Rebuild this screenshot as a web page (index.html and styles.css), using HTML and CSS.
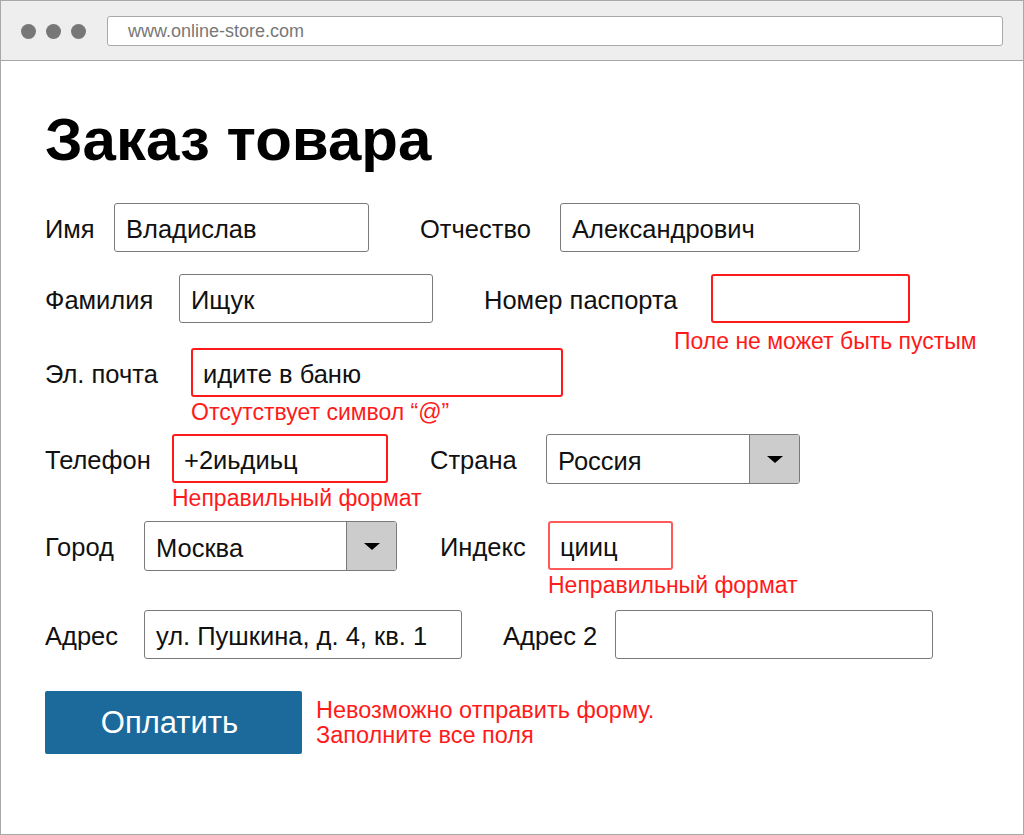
FILE: index.html
```html
<!DOCTYPE html>
<html lang="ru">
<head>
<meta charset="utf-8">
<title>Заказ товара</title>
<link rel="stylesheet" href="styles.css">
</head>
<body>
<div class="window">
  <div class="topbar">
    <div class="dots"><span class="dot"></span><span class="dot"></span><span class="dot"></span></div>
    <div class="url">www.online-store.com</div>
  </div>
  <div class="content">
    <h1 class="title">Заказ товара</h1>

    <div class="row r1">
      <label class="lbl" style="width:69px">Имя</label>
      <div class="field" style="width:255px"><div class="input">Владислав</div></div>
      <label class="lbl gap" style="width:140px;margin-left:51px">Отчество</label>
      <div class="field" style="width:300px"><div class="input">Александрович</div></div>
    </div>

    <div class="row r2">
      <label class="lbl" style="width:134px">Фамилия</label>
      <div class="field" style="width:254px"><div class="input">Ищук</div></div>
      <label class="lbl" style="width:227px;margin-left:51px">Номер паспорта</label>
      <div class="field" style="width:199px">
        <div class="input error"></div>
        <div class="msg msg-shift">Поле не может быть пустым</div>
      </div>
    </div>

    <div class="row r3">
      <label class="lbl" style="width:146px">Эл. почта</label>
      <div class="field" style="width:372px">
        <div class="input error">идите в баню</div>
        <div class="msg">Отсутствует символ “@”</div>
      </div>
    </div>

    <div class="row r4">
      <label class="lbl" style="width:127px">Телефон</label>
      <div class="field" style="width:216px">
        <div class="input error">+2иьдиьц</div>
        <div class="msg">Неправильный формат</div>
      </div>
      <label class="lbl" style="width:116px;margin-left:42px">Страна</label>
      <div class="field" style="width:254px">
        <div class="select"><span class="select-text">Россия</span><span class="arrow"></span></div>
      </div>
    </div>

    <div class="row r5">
      <label class="lbl" style="width:99px">Город</label>
      <div class="field" style="width:253px">
        <div class="select"><span class="select-text">Москва</span><span class="arrow"></span></div>
      </div>
      <label class="lbl" style="width:108px;margin-left:43px">Индекс</label>
      <div class="field" style="width:125px">
        <div class="input error light">цииц</div>
        <div class="msg">Неправильный формат</div>
      </div>
    </div>

    <div class="row r6">
      <label class="lbl" style="width:99px">Адрес</label>
      <div class="field" style="width:318px"><div class="input">ул. Пушкина, д. 4, кв. 1</div></div>
      <label class="lbl" style="width:112px;margin-left:41px">Адрес 2</label>
      <div class="field" style="width:318px"><div class="input"></div></div>
    </div>

    <div class="submit-row">
      <button class="pay">Оплатить</button>
      <div class="submit-msg">Невозможно отправить форму.<br>Заполните все поля</div>
    </div>
  </div>
</div>
</body>
</html>
```

FILE: styles.css
```css
* { box-sizing: border-box; }
html, body { margin: 0; padding: 0; }
body {
  font-family: "Liberation Sans", Arial, Helvetica, sans-serif;
  color: #111;
  background: #fff;
}
.window {
  width: 1024px;
  height: 835px;
  border: 1px solid #a8a8a8;
  overflow: hidden;
}
.topbar {
  height: 60px;
  background: #eeeeee;
  border-bottom: 1px solid #a8a8a8;
  display: flex;
  align-items: center;
  padding-left: 20px;
  padding-top: 1px;
}
.dots { display: flex; gap: 10px; }
.dot {
  width: 15px;
  height: 15px;
  border-radius: 50%;
  background: #777;
}
.url {
  margin-left: 21px;
  width: 896px;
  height: 30px;
  background: #fff;
  border: 1px solid #aaa;
  border-radius: 3px;
  font-size: 18px;
  color: #777;
  padding-left: 20px;
  line-height: 28px;
}
.content {
  padding-left: 44px;
}
.title {
  margin: 0;
  padding-top: 48px;
  font-size: 60px;
  font-weight: bold;
  line-height: 62px;
  color: #000;
}
.row {
  display: flex;
  align-items: center;
  height: 49px;
}
.r1 { margin-top: 32px; }
.r2 { margin-top: 22px; }
.r3 { margin-top: 25px; }
.r4 { margin-top: 37px; }
.r5 { margin-top: 38px; }
.r6 { margin-top: 40px; }
.lbl {
  flex: none;
  font-size: 25.5px;
  color: #111;
  white-space: nowrap;
  padding-top: 4px;
}
.field {
  flex: none;
  height: 49px;
}
.input {
  height: 49px;
  border: 1px solid #7a7a7a;
  border-radius: 3px;
  font-size: 25.5px;
  line-height: 47px;
  padding-top: 2px;
  padding-left: 11px;
  white-space: nowrap;
  overflow: hidden;
}
.input.error {
  border: 2px solid #ff1a1a;
  line-height: 45px;
  padding-left: 10px;
}
.input.error.light { border-color: #ff5a5a; }
.msg {
  color: #ff1a1a;
  font-size: 23px;
  line-height: 26px;
  margin-top: 2px;
  white-space: nowrap;
}
.msg-shift { margin-left: -37px; margin-top: 5px; }
.select {
  height: 50px;
  border: 1px solid #7a7a7a;
  border-radius: 3px;
  display: flex;
  overflow: hidden;
}
.select-text {
  flex: 1;
  font-size: 25.5px;
  line-height: 48px;
  padding-top: 2px;
  padding-left: 11px;
}
.arrow {
  flex: none;
  width: 50px;
  background: #cccccc;
  border-left: 1px solid #7a7a7a;
  display: flex;
  align-items: center;
  justify-content: center;
}
.arrow::after {
  content: "";
  width: 0;
  height: 0;
  border-left: 8px solid transparent;
  border-right: 8px solid transparent;
  border-top: 7px solid #000;
}
.submit-row {
  display: flex;
  align-items: center;
  margin-top: 32px;
}
.pay {
  width: 257px;
  height: 63px;
  background: #1b6a9b;
  border: none;
  border-radius: 2px;
  color: #fff;
  font-family: "Liberation Sans", Arial, sans-serif;
  font-size: 31px;
  padding: 0 8px 0 0;
}
.submit-msg {
  margin-left: 14px;
  color: #ff1a1a;
  font-size: 23.5px;
  line-height: 25px;
}
```
